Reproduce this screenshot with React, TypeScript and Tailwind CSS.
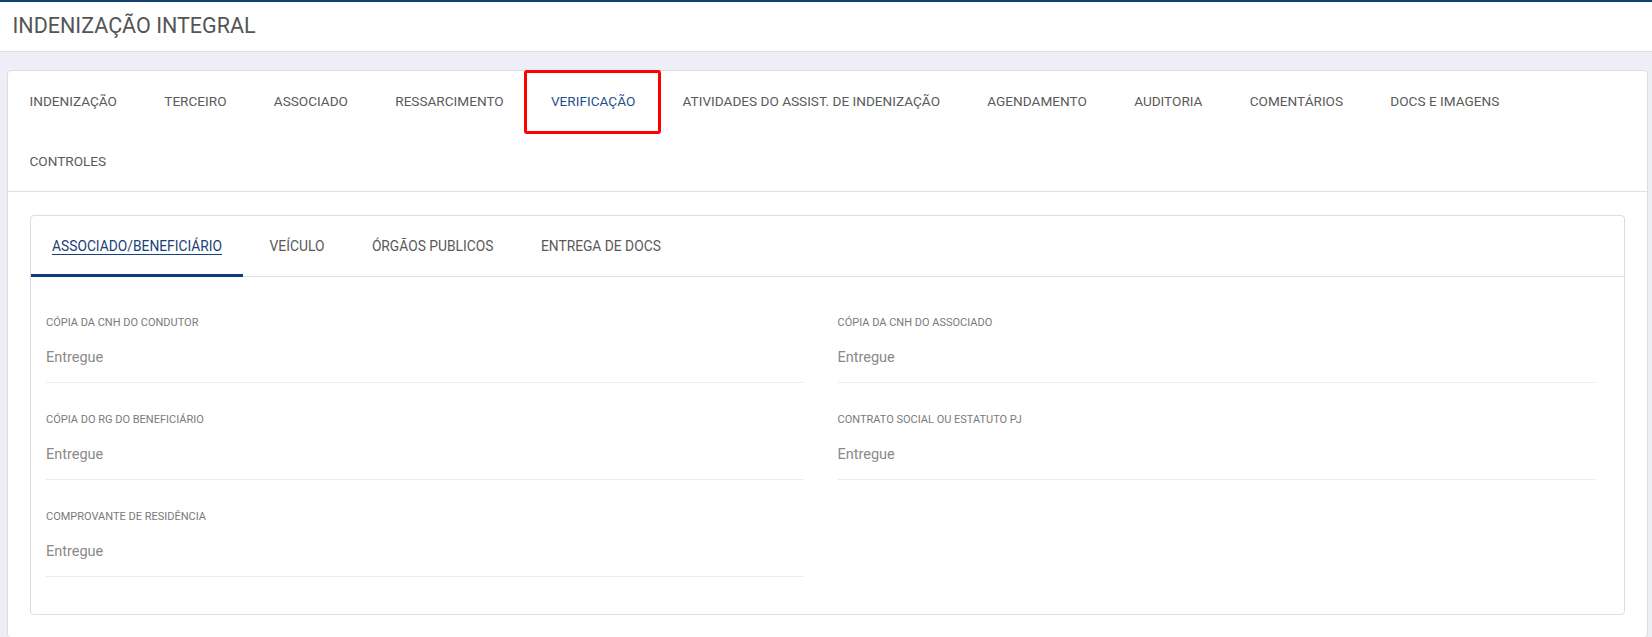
const mainTabs = [
  "INDENIZAÇÃO",
  "TERCEIRO",
  "ASSOCIADO",
  "RESSARCIMENTO",
  "VERIFICAÇÃO",
  "ATIVIDADES DO ASSIST. DE INDENIZAÇÃO",
  "AGENDAMENTO",
  "AUDITORIA",
  "COMENTÁRIOS",
  "DOCS E IMAGENS",
  "CONTROLES",
];

const subTabs = ["ASSOCIADO/BENEFICIÁRIO", "VEÍCULO", "ÓRGÃOS PUBLICOS", "ENTREGA DE DOCS"];

const fields = [
  { label: "CÓPIA DA CNH DO CONDUTOR", value: "Entregue" },
  { label: "CÓPIA DA CNH DO ASSOCIADO", value: "Entregue" },
  { label: "CÓPIA DO RG DO BENEFICIÁRIO", value: "Entregue" },
  { label: "CONTRATO SOCIAL OU ESTATUTO PJ", value: "Entregue" },
  { label: "COMPROVANTE DE RESIDÊNCIA", value: "Entregue" },
];

export default function App() {
  const activeMain = "VERIFICAÇÃO";
  const activeSub = "ASSOCIADO/BENEFICIÁRIO";

  return (
    <div className="min-h-[637px] bg-[#eeeef6] font-['Roboto',sans-serif] text-[#5a5a5a]">
      {/* Header */}
      <header className="flex h-[52px] items-center border-t-2 border-b border-t-[#143f74] border-b-[#dcdce2] bg-white px-[12.5px]">
        <h1 className="text-[21.5px] font-normal text-[#555]">INDENIZAÇÃO INTEGRAL</h1>
      </header>

      <main className="pt-[18px] pr-[4px] pl-[7px]">
        <div className="rounded-[4px] border border-[#dcdce2] bg-white">
          {/* Main tabs */}
          <ul className="flex flex-wrap gap-x-[4.3px] border-b border-[#e0e0e4] pr-[20px]">
            {mainTabs.map((tab) => {
              const active = tab === activeMain;
              return (
                <li
                  key={tab}
                  className={`relative flex h-[60px] items-center px-[21.5px] text-[13.6px] whitespace-nowrap ${
                    active ? "text-[#1f4f8f]" : "text-[#5a5a5a]"
                  }`}
                >
                  {tab}
                  {active && (
                    <span className="pointer-events-none absolute -top-px -right-[4px] -bottom-[3px] -left-[5px] rounded-[3px] border-[3px] border-[#ff0000]" />
                  )}
                </li>
              );
            })}
          </ul>

          {/* Body */}
          <div className="px-[22px] pt-[23px] pb-[22px]">
            <div className="rounded-[4px] border border-[#dcdce2]">
              <ul className="flex h-[61px] gap-x-[5.5px] border-b border-[#dcdce2]">
                {subTabs.map((tab) => {
                  const active = tab === activeSub;
                  return (
                    <li
                      key={tab}
                      className={`-mb-px flex items-center border-b-[3px] px-[21px] pt-[3px] text-[13.8px] whitespace-nowrap ${
                        active
                          ? "border-[#0d3c7c] text-[#1a3f7a] underline underline-offset-[3px]"
                          : "border-transparent text-[#5a5a5a]"
                      }`}
                    >
                      {tab}
                    </li>
                  );
                })}
              </ul>

              <div className="grid grid-cols-2 gap-x-[34px] pt-[9px] pr-[29px] pb-[37px] pl-[15px]">
                {fields.map((f) => (
                  <div key={f.label} className="border-b border-[#ececec] pt-[30px] pb-[14px]">
                    <div className="text-[11px] leading-[14px] text-[#7a7a7a]">{f.label}</div>
                    <div className="mt-[17px] text-[14.5px] leading-[21px] text-[#8a8a8a]">{f.value}</div>
                  </div>
                ))}
              </div>
            </div>
          </div>
        </div>
      </main>
    </div>
  );
}
